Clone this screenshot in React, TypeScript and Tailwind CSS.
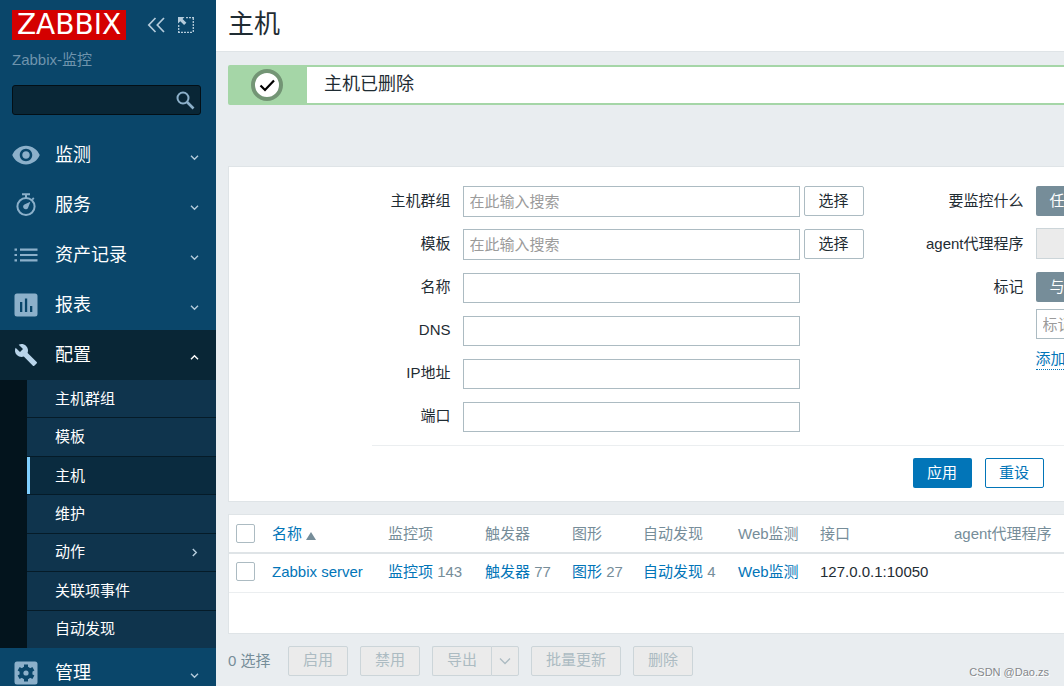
import React, { useState } from 'react';
import clsx from 'clsx';

const EyeIcon = () => (
  <svg width="30" height="30" viewBox="0 0 24 24" fill="currentColor">
    <path d="M12 4.5C7 4.5 2.73 7.61 1 12c1.73 4.39 6 7.5 11 7.5s9.27-3.11 11-7.5c-1.73-4.39-6-7.5-11-7.5zM12 17c-2.76 0-5-2.24-5-5s2.24-5 5-5 5 2.24 5 5-2.24 5-5 5zm0-8c-1.66 0-3 1.34-3 3s1.34 3 3 3 3-1.34 3-3-1.34-3-3-3z" />
  </svg>
);

const StopwatchIcon = () => (
  <svg width="24" height="24" viewBox="0 0 24 24" fill="none" stroke="currentColor">
    <circle cx="12" cy="13.5" r="8.6" strokeWidth="2" />
    <path d="M8 1.2h8M12 1.5v3.5" strokeWidth="2" />
    <path d="M18.2 6.6l1.6-1.6" strokeWidth="1.8" />
    <path d="M16.4 8.8l-2.2 5.6a2.6 2.6 0 1 1-3.3-3.2z" fill="currentColor" stroke="none" />
  </svg>
);

const ListIcon = () => (
  <svg width="24" height="24" viewBox="0 0 24 24" fill="currentColor">
    <path d="M.5 5.5h2.5v2.2H.5zM.5 10.9h2.5v2.2H.5zM.5 16.3h2.5v2.2H.5zM6 5.5h17.5v2.2H6zM6 10.9h17.5v2.2H6zM6 16.3h17.5v2.2H6z" />
  </svg>
);

const ReportsIcon = () => (
  <svg width="24" height="24" viewBox="0 0 24 24" fill="currentColor">
    <path fillRule="evenodd" d="M3 .5h18A2.5 2.5 0 0 1 23.5 3v18a2.5 2.5 0 0 1-2.5 2.5H3A2.5 2.5 0 0 1 .5 21V3A2.5 2.5 0 0 1 3 .5zM6 9v10h2.3V9zM10.9 5.500V19h2.3V5.500zM16 13v6h2.3v-6z" />
  </svg>
);

const WrenchIcon = () => (
  <svg width="24" height="24" viewBox="0 0 24 24" fill="currentColor">
    <path d="M22.7 19l-9.1-9.1c.9-2.3.4-5-1.5-6.9-2-2-5-2.4-7.4-1.3L9 6 6 9 1.6 4.7C.4 7.1.9 10.1 2.9 12.1c1.9 1.9 4.6 2.4 6.9 1.5l9.1 9.1c.4.4 1 .4 1.4 0l2.3-2.3c.5-.4.5-1.1.1-1.4z" />
  </svg>
);

const GearIcon = () => (
  <svg width="24" height="24" viewBox="0 0 24 24">
    <rect x="0.5" y="0.5" width="23" height="23" rx="2.5" fill="currentColor" />
    <g fill="#0a466a">
      <path d="M10 3.5h4v17h-4z" />
      <path d="M10 3.5h4v17h-4z" transform="rotate(60 12 12)" />
      <path d="M10 3.5h4v17h-4z" transform="rotate(120 12 12)" />
      <circle cx="12" cy="12" r="6.5" />
    </g>
    <circle cx="12" cy="12" r="2.6" fill="currentColor" />
  </svg>
);

const Chevron = ({ className }: { className?: string }) => (
  <svg width="9" height="9" viewBox="0 0 9 9" fill="none" stroke="currentColor" strokeWidth="1.4" className={className}>
    <path d="M1 2.8l3.5 3.5L8 2.8" />
  </svg>
);

const menu = [
  { label: '监测', Icon: EyeIcon },
  { label: '服务', Icon: StopwatchIcon },
  { label: '资产记录', Icon: ListIcon },
  { label: '报表', Icon: ReportsIcon },
  {
    label: '配置',
    Icon: WrenchIcon,
    items: ['主机群组', '模板', '主机', '维护', '动作', '关联项事件', '自动发现'],
  },
  { label: '管理', Icon: GearIcon },
];

const hosts = [
  { name: 'Zabbix server', items: 143, triggers: 77, graphs: 27, discovery: 4, iface: '127.0.0.1:10050' },
];

const inputClasses = 'block h-[30px] w-[337px] border border-[#acbbc2] bg-white px-[6px] text-[15px] outline-none placeholder:text-[#9b9b9b] focus:border-[#0275b8]';
const labelClasses = 'h-[30px] text-right leading-[30px]';
const selectButton = 'h-[30px] w-[60px] rounded-[2px] border border-[#acbbc2] bg-white';
const mutedButton = 'h-[30px] rounded-[2px] border border-[#ccd5d9] bg-[#ebebeb] px-[14px] text-[#acbbc2]';
const checkbox = 'block size-[19px] appearance-none rounded-[2px] border border-[#acbbc2] bg-white checked:bg-[#0275b8]';

function Sidebar() {
  const [open, setOpen] = useState('配置');

  return (
    <aside className="w-[216px] shrink-0 overflow-hidden bg-[#0a466a] text-white">
      <div className="flex items-center pt-[10px] pb-[10px] pl-3">
        <a href="#" className="flex h-[30px] w-[114px] items-center justify-center bg-[#d40000] font-['DejaVu_Sans',sans-serif] text-[28px] leading-[30px]">ZABBIX</a>
        <button aria-label="折叠" className="ml-[21px] text-[#b4cbdb]">
          <svg width="19" height="16" viewBox="0 0 19 16" fill="none" stroke="currentColor" strokeWidth="1.7">
            <path d="M8.5 1L1.8 8l6.7 7M17 1l-6.7 7 6.7 7" />
          </svg>
        </button>
        <button aria-label="全屏" className="ml-3 text-[#b4cbdb]">
          <svg width="16" height="16" viewBox="0 0 16 16" fill="none" stroke="currentColor" strokeWidth="1.3">
            <path d="M8 .7h8M15.3 1v15M0 15.3h15M.7 8v7" strokeDasharray="2 1" />
            <path d="M0 0h6.500L4.600 1.900l3.800 3.800-2.300 2.300-3.800-3.800L0 6.500z" fill="currentColor" stroke="none" />
          </svg>
        </button>
      </div>
      <div className="pl-3 text-[15px] leading-5 text-[#6f94ad]">Zabbix-监控</div>
      <form className="mx-3 mt-[15px] mb-[15px] flex h-[30px] w-[189px] items-center rounded-[3px] border border-[#030f16] bg-[#092636]">
        <input aria-label="搜索" className="h-full min-w-0 flex-1 bg-transparent px-2 outline-none" />
        <button type="button" aria-label="搜索" className="mr-[5px] text-[#8cb0ca]">
          <svg width="19" height="19" viewBox="0 0 19 19" fill="none" stroke="currentColor" strokeWidth="2">
            <circle cx="7" cy="7" r="5.5" />
            <path d="M11 11l6.5 6.5" strokeWidth="2.6" />
          </svg>
        </button>
      </form>
      <nav>
        {menu.map(({ label, Icon, items }) => {
          const isOpen = open === label && !!items;
          return (
            <div key={label} className={clsx(isOpen && 'bg-[#03141d]')}>
              <button
                onClick={() => setOpen(isOpen ? '' : label)}
                className={clsx('flex h-[50px] w-full items-center pr-[17px] text-left text-[18px]', isOpen && 'bg-[#092636]')}
              >
                <span className={clsx('flex w-[52px] justify-center', isOpen ? 'text-[#b8d4ea]' : 'text-[#8cb0ca]')}><Icon /></span>
                <span className="ml-[3px] flex-1 leading-6">{label}</span>
                <Chevron className={clsx('mt-1', isOpen ? 'rotate-180' : 'text-[#b4cbdb]')} />
              </button>
              {isOpen && (
                <ul className="ml-[27px] flex h-[268px] flex-col text-[15px]">
                  {items.map((item) => (
                    <li key={item} className="flex flex-1 border-b border-[#051b28] bg-[#0f344d] last:border-b-0">
                      <a
                        href="#"
                        className={clsx('flex flex-1 items-center justify-between border-l-[3px] pr-[17px] pl-[25px] leading-5', item === '主机' ? 'border-[#7fd0ff] bg-[#0a2b3f]' : 'border-transparent')}
                      >
                        {item}
                        {item === '动作' && <Chevron className="-rotate-90 text-[#b4cbdb]" />}
                      </a>
                    </li>
                  ))}
                </ul>
              )}
            </div>
          );
        })}
      </nav>
    </aside>
  );
}

function Filter() {
  return (
    <section className="mt-[61px] border border-[#dfe4e7] bg-white pt-[19px] pb-[13px]">
      <form className="mx-auto w-[1213px]">
        <div className="grid grid-cols-[79px_401px_148px_1fr] gap-x-3">
          <div className="flex flex-col gap-[13px]">
            <label htmlFor="groups" className={labelClasses}>主机群组</label>
            <label htmlFor="templates" className={labelClasses}>模板</label>
            <label htmlFor="name" className={labelClasses}>名称</label>
            <label htmlFor="dns" className={labelClasses}>DNS</label>
            <label htmlFor="ip" className={labelClasses}>IP地址</label>
            <label htmlFor="port" className={labelClasses}>端口</label>
          </div>
          <div className="flex flex-col gap-[13px]">
            <div className="flex flex-col gap-3">
              {['groups', 'templates'].map((id) => (
                <div key={id} className="flex h-[31px] gap-1">
                  <input id={id} placeholder="在此输入搜索" className={clsx(inputClasses, 'h-[31px]')} />
                  <button type="button" className={selectButton}>选择</button>
                </div>
              ))}
            </div>
            {['name', 'dns', 'ip', 'port'].map((id) => (
              <input key={id} id={id} className={inputClasses} />
            ))}
          </div>
          <div className="flex flex-col gap-[13px]">
            <span className={labelClasses}>要监控什么</span>
            <label htmlFor="proxy" className={labelClasses}>agent代理程序</label>
            <label htmlFor="tag" className={labelClasses}>标记</label>
          </div>
          <div>
            <div className="flex h-[30px]">
              <button type="button" className="rounded-l-[2px] bg-[#768d99] px-[14px] text-white">任何</button>
              <button type="button" className="border border-[#acbbc2] px-[14px]">服务器</button>
              <button type="button" className="rounded-r-[2px] border border-l-0 border-[#acbbc2] px-[14px]">代理</button>
            </div>
            <input id="proxy" disabled className="mt-3 block h-[31px] w-[337px] border border-[#ccd5d9] bg-[#ebebeb]" />
            <div className="mt-[13px] flex h-[30px]">
              <button type="button" className="rounded-l-[2px] bg-[#768d99] px-[14px] text-white">与/或</button>
              <button type="button" className="rounded-r-[2px] border border-l-0 border-[#acbbc2] px-[14px]">或</button>
            </div>
            <input id="tag" placeholder="标记" className={clsx(inputClasses, 'mt-[7px]')} />
            <button type="button" className="mt-[10px] border-b border-dotted border-[#0275b8] leading-5 text-[#0275b8]">添加</button>
          </div>
        </div>
        <div className="mt-[13px] flex justify-center gap-[13px] border-t border-[#ebeef0] pt-3">
          <button type="button" className="h-[30px] w-[59px] rounded-[2px] bg-[#0275b8] text-white">应用</button>
          <button type="reset" className="h-[30px] w-[59px] rounded-[2px] border border-[#0275b8] text-[#0275b8]">重设</button>
        </div>
      </form>
    </section>
  );
}

function HostTable() {
  return (
    <section className="mt-3 border border-[#dfe4e7] bg-white pb-10">
      <table className="w-full table-fixed border-collapse text-left leading-5 text-[#768d99]">
        <colgroup>
          <col className="w-[38px]" />
          <col className="w-[116px]" />
          <col className="w-[97px]" />
          <col className="w-[87px]" />
          <col className="w-[71px]" />
          <col className="w-[95px]" />
          <col className="w-[82px]" />
          <col className="w-[134px]" />
          <col />
        </colgroup>
        <thead>
          <tr className="h-[38px] border-b-2 border-[#dfe4e7] [&>th]:px-[5px] [&>th]:font-normal">
            <th><input type="checkbox" aria-label="全选" className={clsx(checkbox, 'ml-[2px]')} /></th>
            <th>
              <a href="#" className="flex items-center gap-1 text-[#0275b8]">
                名称
                <svg width="10" height="8" viewBox="0 0 10 8" className="mt-1 text-[#768d99]">
                  <path d="M5 0l5 8H0z" fill="currentColor" />
                </svg>
              </a>
            </th>
            <th>监控项</th>
            <th>触发器</th>
            <th>图形</th>
            <th>自动发现</th>
            <th>Web监测</th>
            <th>接口</th>
            <th>agent代理程序</th>
          </tr>
        </thead>
        <tbody>
          {hosts.map((h) => (
            <tr key={h.name} className="h-[39px] border-b border-[#ebeef0] [&_a]:text-[#0275b8] [&>td]:px-[5px] [&>td]:pb-[2px]">
              <td><input type="checkbox" aria-label={h.name} className={clsx(checkbox, 'ml-[2px]')} /></td>
              <td><a href="#">{h.name}</a></td>
              <td><a href="#">监控项</a> {h.items}</td>
              <td><a href="#">触发器</a> {h.triggers}</td>
              <td><a href="#">图形</a> {h.graphs}</td>
              <td><a href="#">自动发现</a> {h.discovery}</td>
              <td><a href="#">Web监测</a></td>
              <td className="text-[#1f2c33]">{h.iface}</td>
              <td />
            </tr>
          ))}
        </tbody>
      </table>
    </section>
  );
}

export default function App() {
  return (
    <div className="relative flex h-screen overflow-hidden bg-[#e9edf0] font-['Liberation_Sans','Noto_Sans_CJK_SC',sans-serif] text-[15px] text-[#1f2c33]">
      <Sidebar />
      <main className="min-w-0 flex-1 overflow-hidden">
        <header className="h-[52px] border-b border-[#dfe4e7] bg-white px-3">
          <h1 className="text-[26px] leading-[48px]">主机</h1>
        </header>
        <div className="min-w-[1524px] px-3 pt-[13px]">
          <div role="status" className="flex h-10 items-stretch rounded-[2px] border-2 border-[#a5d6a7] bg-white">
            <div className="flex w-[77px] items-center justify-center bg-[#a5d6a7] pr-1">
              <svg width="32" height="32" viewBox="0 0 32 32" fill="none">
                <circle cx="16" cy="16" r="14" fill="#fff" stroke="#739575" strokeWidth="4" />
                <path d="M9.500 16.500l4.500 4.500 9-9.500" stroke="#000" strokeWidth="2.2" />
              </svg>
            </div>
            <span className="ml-[17px] text-[18px] leading-[34px]">主机已删除</span>
          </div>
          <Filter />
          <HostTable />
          <footer className="mt-3 flex items-start">
            <span className="w-[60px] leading-[30px] text-[#768d99]">0 选择</span>
            <div className="flex gap-3">
              <button disabled className={mutedButton}>启用</button>
              <button disabled className={mutedButton}>禁用</button>
              <div className="flex">
                <button disabled className={clsx(mutedButton, 'rounded-r-none border-r-0')}>导出</button>
                <button disabled aria-label="导出格式" className="flex h-[30px] w-[28px] items-center justify-center rounded-r-[2px] border border-[#ccd5d9] bg-[#ebebeb] text-[#acbbc2]">
                  <svg width="12" height="8" viewBox="0 0 12 8" fill="none" stroke="currentColor" strokeWidth="1.3">
                    <path d="M1 1.500l5 5 5-5" />
                  </svg>
                </button>
              </div>
              <button disabled className={mutedButton}>批量更新</button>
              <button disabled className={mutedButton}>删除</button>
            </div>
          </footer>
        </div>
      </main>
      <span className="absolute right-[15px] bottom-[6px] text-[11px] leading-4 text-[#85888b] [text-shadow:1px_1px_0_#fff]">CSDN @Dao.zs</span>
    </div>
  );
}
